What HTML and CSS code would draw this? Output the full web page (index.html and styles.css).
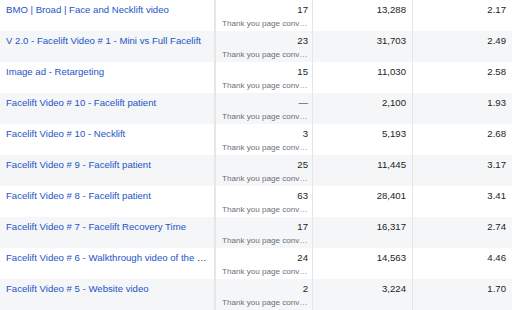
FILE: index.html
```html
<!DOCTYPE html>
<html>
<head>
<meta charset="utf-8">
<link rel="stylesheet" href="styles.css">
</head>
<body>
<div class="table">
  <div class="row">
    <div class="cell name"><a class="link">BMO | Broad | Face and Necklift video</a></div>
    <div class="cell res"><span class="num">17</span><span class="sub">Thank you page conversions</span></div>
    <div class="cell val">13,288</div>
    <div class="cell val last">2.17</div>
  </div>
  <div class="row alt">
    <div class="cell name"><a class="link">V 2.0 - Facelift Video # 1 - Mini vs Full Facelift</a></div>
    <div class="cell res"><span class="num">23</span><span class="sub">Thank you page conversions</span></div>
    <div class="cell val">31,703</div>
    <div class="cell val last">2.49</div>
  </div>
  <div class="row">
    <div class="cell name"><a class="link">Image ad - Retargeting</a></div>
    <div class="cell res"><span class="num">15</span><span class="sub">Thank you page conversions</span></div>
    <div class="cell val">11,030</div>
    <div class="cell val last">2.58</div>
  </div>
  <div class="row alt">
    <div class="cell name"><a class="link">Facelift Video # 10 - Facelift patient</a></div>
    <div class="cell res"><span class="num">—</span><span class="sub">Thank you page conversions</span></div>
    <div class="cell val">2,100</div>
    <div class="cell val last">1.93</div>
  </div>
  <div class="row">
    <div class="cell name"><a class="link">Facelift Video # 10 - Necklift</a></div>
    <div class="cell res"><span class="num">3</span><span class="sub">Thank you page conversions</span></div>
    <div class="cell val">5,193</div>
    <div class="cell val last">2.68</div>
  </div>
  <div class="row alt">
    <div class="cell name"><a class="link">Facelift Video # 9 - Facelift patient</a></div>
    <div class="cell res"><span class="num">25</span><span class="sub">Thank you page conversions</span></div>
    <div class="cell val">11,445</div>
    <div class="cell val last">3.17</div>
  </div>
  <div class="row">
    <div class="cell name"><a class="link">Facelift Video # 8 - Facelift patient</a></div>
    <div class="cell res"><span class="num">63</span><span class="sub">Thank you page conversions</span></div>
    <div class="cell val">28,401</div>
    <div class="cell val last">3.41</div>
  </div>
  <div class="row alt">
    <div class="cell name"><a class="link">Facelift Video # 7 - Facelift Recovery Time</a></div>
    <div class="cell res"><span class="num">17</span><span class="sub">Thank you page conversions</span></div>
    <div class="cell val">16,317</div>
    <div class="cell val last">2.74</div>
  </div>
  <div class="row">
    <div class="cell name"><a class="link">Facelift Video # 6 - Walkthrough video of the facility tour</a></div>
    <div class="cell res"><span class="num">24</span><span class="sub">Thank you page conversions</span></div>
    <div class="cell val">14,563</div>
    <div class="cell val last">4.46</div>
  </div>
  <div class="row alt">
    <div class="cell name"><a class="link">Facelift Video # 5 - Website video</a></div>
    <div class="cell res"><span class="num">2</span><span class="sub">Thank you page conversions</span></div>
    <div class="cell val">3,224</div>
    <div class="cell val last">1.70</div>
  </div>
</div>
</body>
</html>
```

FILE: styles.css
```css
* { box-sizing: border-box; }
html, body { margin: 0; padding: 0; background: #ffffff; }
body {
  font-family: "Liberation Sans", Arial, sans-serif;
  color: #1c1e21;
  width: 512px;
  height: 310px;
  overflow: hidden;
}
.table { display: flex; flex-direction: column; }
.row {
  display: grid;
  grid-template-columns: 216px 97px 100px 99px;
  height: 31px;
  background: #ffffff;
}
.row.alt { background: #f5f6f7; }
.cell {
  height: 31px;
  font-size: 9.6px;
  line-height: 12px;
  padding-top: 4px;
  overflow: hidden;
}
.name {
  padding-left: 6px;
  padding-right: 7px;
  border-right: 2px solid #e4e6ea;
  white-space: nowrap;
  text-overflow: ellipsis;
}
.link { color: #1d54c6; text-decoration: none; }
.res {
  display: flex;
  flex-direction: column;
  align-items: stretch;
  padding-left: 6px;
  padding-right: 1px;
  border-right: 1px solid #e4e6ea;
}
.num { text-align: right; padding-right: 3px; }
.sub {
  font-size: 8.1px;
  line-height: 10px;
  margin-top: 3px;
  color: #6b6f76;
  white-space: nowrap;
  overflow: hidden;
  text-overflow: ellipsis;
}
.val {
  text-align: right;
  padding-right: 6px;
  border-right: 1px solid #e4e6ea;
}
.val.last { border-right: none; }
```
